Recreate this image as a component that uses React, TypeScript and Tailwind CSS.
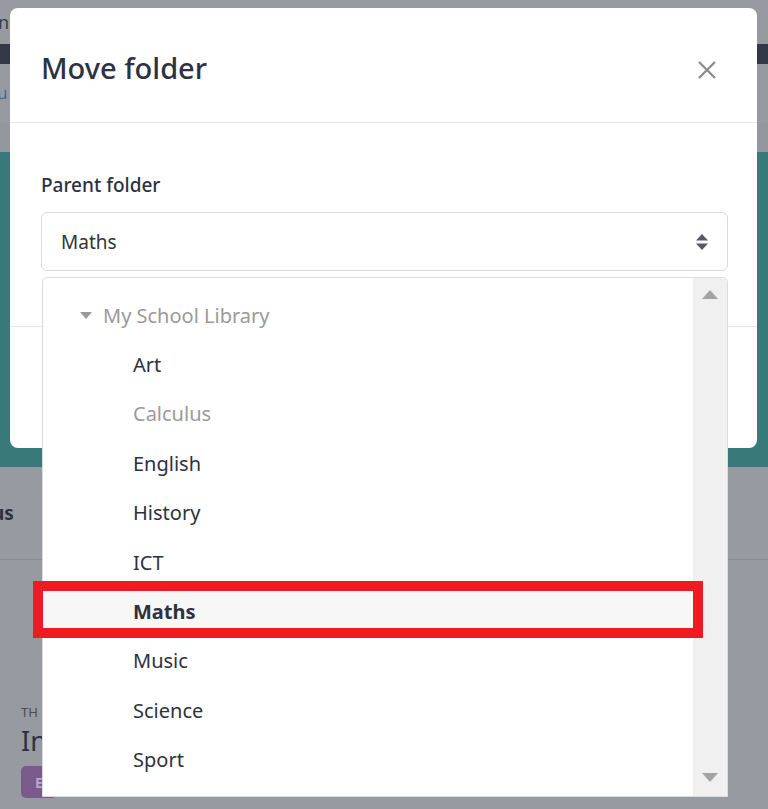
import React from "react";

interface FolderItem {
  label: string;
  muted?: boolean;
  selected?: boolean;
}

const folders: FolderItem[] = [
  { label: "Art" },
  { label: "Calculus", muted: true },
  { label: "English" },
  { label: "History" },
  { label: "ICT" },
  { label: "Maths", selected: true },
  { label: "Music" },
  { label: "Science" },
  { label: "Sport" },
];

const SortIcon: React.FC = () => (
  <svg width="12" height="16" viewBox="0 0 12 16" className="text-[#565a68]">
    <path d="M6 0 12 6.5H0Z" fill="currentColor" />
    <path d="M6 16 12 9.5H0Z" fill="currentColor" />
  </svg>
);

const CloseIcon: React.FC = () => (
  <svg width="20" height="20" viewBox="0 0 20 20" className="mt-[9px] text-[#8a8a8a]">
    <path d="M2 2 18 18M18 2 2 18" stroke="currentColor" strokeWidth="2.2" />
  </svg>
);

const App: React.FC = () => {
  return (
    <div
      className="relative h-[809px] w-[768px] overflow-hidden bg-[#989aa2] text-[#2d3142]"
      style={{ fontFamily: '"Noto Sans", "Open Sans", sans-serif' }}
    >
      {/* page behind the overlay */}
      <div className="flex flex-col">
        <div className="flex h-[44px] items-center text-[18px] text-[#3a3d4a]">
          <span className="-ml-[2px]">n</span>
        </div>
        <div className="h-[20px] bg-[#353846]" />
        <div className="flex h-[58px] items-center text-[17px] text-[#4a6a8a]">
          <span className="-ml-[3px]">u</span>
        </div>
        <div className="h-[30px] bg-[#95979e]" />
        <div className="h-[315px] bg-[#387a7a]" />
        <div className="flex h-[93px] items-center border-b border-[#8a8c94]">
          <span className="-ml-[8px] text-[19px] font-bold text-[#2d3142]">us</span>
        </div>
        <div className="pl-[21px] pt-[146px]">
          <div className="text-[13px] leading-none text-[#4a4d58]">TH</div>
          <div className="mt-[8px] text-[27px] leading-none text-[#2d3142]">In</div>
          <div className="mt-[12px] flex h-[32px] w-[36px] items-center justify-center rounded-[5px] bg-[#7a5a8c] text-[14px] font-bold text-[#b8a8c4]">
            E
          </div>
        </div>
      </div>

      {/* modal */}
      <div className="absolute left-[10px] top-[8px] flex h-[440px] w-[747px] flex-col rounded-[8px] bg-white">
        <div className="flex h-[115px] items-center justify-between border-b border-[#e6e6e6] pl-[31px] pr-[40px]">
          <h2 className="mt-[4px] text-[29px] font-medium leading-none text-[#2d3142]">Move folder</h2>
          <CloseIcon />
        </div>
        <div className="h-[204px] border-b border-[#e6e6e6] px-[31px] pt-[50px]">
          <label className="block text-[19px] font-medium leading-[24px] text-[#2d3142]">
            Parent folder
          </label>
          <div className="mt-[15px] flex h-[59px] w-[687px] items-center justify-between rounded-[6px] border border-[#d9d9d9] pl-[19px] pr-[19px]">
            <span className="mt-[2px] text-[19px] text-[#333]">Maths</span>
            <SortIcon />
          </div>
        </div>
        <div className="flex flex-1 items-start justify-end pr-[30px] pt-[33px]">
          <div className="h-[53px] w-[120px] rounded-[5px] bg-[#2d3142]" />
        </div>
      </div>

      {/* dropdown list */}
      <div className="absolute left-[42px] top-[277px] flex h-[520px] w-[686px] overflow-hidden rounded-t-[5px] border border-[#dcdcdc] bg-white">
        <div className="flex-1 pt-[13px]">
          <div className="flex h-[49.4px] items-center pl-[37px] text-[20px] text-[#9a9a9a]">
            <svg width="12" height="7" viewBox="0 0 12 7" className="mr-[11px]">
              <path d="M0 0H12L6 7Z" fill="currentColor" />
            </svg>
            My School Library
          </div>
          {folders.map((f) => (
            <div
              key={f.label}
              className={
                "flex h-[49.4px] items-center pl-[90px] text-[20px] " +
                (f.selected ? "bg-[#f7f7f7] font-bold text-[#2d3142]" : f.muted ? "text-[#9a9a9a]" : "text-[#2d3142]")
              }
            >
              {f.label}
            </div>
          ))}
        </div>
        <div className="flex w-[34px] flex-col items-center justify-between bg-[#f0f0f0] pb-[14px] pt-[12px]">
          <svg width="16" height="9" viewBox="0 0 16 9">
            <path d="M8 0 16 9H0Z" fill="#a3a3a3" />
          </svg>
          <svg width="16" height="9" viewBox="0 0 16 9">
            <path d="M0 0H16L8 9Z" fill="#a3a3a3" />
          </svg>
        </div>
      </div>

      {/* highlight annotation */}
      <div className="absolute left-[33px] top-[581px] h-[57px] w-[670px] border-[10px] border-[#ed1c24]" />
    </div>
  );
};

export default App;
